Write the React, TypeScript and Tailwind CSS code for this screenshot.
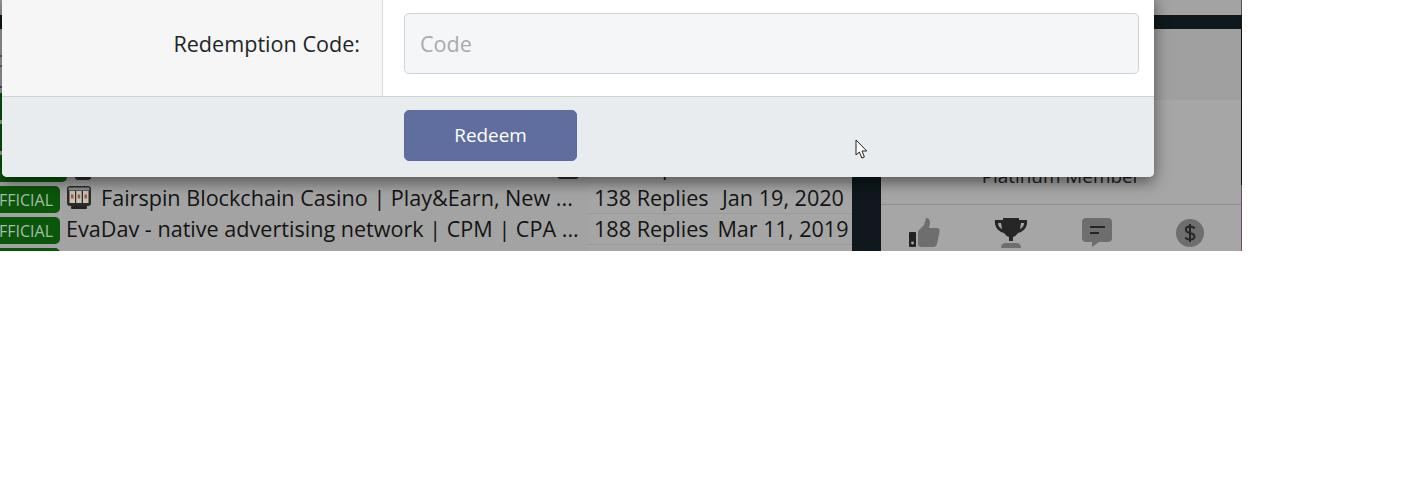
const rows = [
  { title: "", replies: "", date: "" },
  { title: "", replies: "", date: "" },
  { title: "", replies: "214 Replies", date: "", hidden: true },
  { title: "Fairspin Blockchain Casino | Play&Earn, New ...", replies: "138 Replies", date: "Jan 19, 2020", slot: true },
  { title: "EvaDav - native advertising network | CPM | CPA ...", replies: "188 Replies", date: "Mar 11, 2019" },
  { title: "", replies: "", date: "" },
];

function SlotIcon() {
  return (
    <svg width="26" height="26" viewBox="0 0 26 26" className="shrink-0">
      <rect x="1" y="1" width="24" height="20" rx="3" fill="#2b2b2b" />
      <rect x="2.5" y="2.5" width="21" height="3" fill="#8c8c8c" />
      <rect x="3.5" y="6" width="5.5" height="12" fill="#c9c2b4" />
      <rect x="10.2" y="6" width="5.5" height="12" fill="#c9c2b4" />
      <rect x="17" y="6" width="5.5" height="12" fill="#c9c2b4" />
      <rect x="5" y="9.5" width="2.5" height="4" fill="#9a5a48" />
      <rect x="11.7" y="9.5" width="2.5" height="4" fill="#9a5a48" />
      <rect x="18.5" y="9.5" width="2.5" height="4" fill="#9a5a48" />
      <rect x="5" y="21" width="16" height="3" rx="1" fill="#222" />
    </svg>
  );
}

function ThumbIcon() {
  return (
    <svg width="32" height="30" viewBox="0 0 32 30" className="ml-[28px]">
      <rect x="0" y="14" width="7" height="15" rx="1" fill="#222" />
      <circle cx="3.5" cy="25" r="1.4" fill="#aaa" />
      <path d="M9 13 L15 7 L17 0 Q21 0 21 5 L20 10 H28 Q31 10 30.5 14 L28 26 Q27 29 24 29 H13 Q9 29 9 26 Z" fill="#6e6e6e" />
    </svg>
  );
}

function TrophyIcon() {
  return (
    <svg width="34" height="30" viewBox="0 0 34 30" className="ml-[53px]">
      <path d="M9 0 H25 V2 H33 Q34 10 27 14 L24 15 Q22 18 19 19 V23 H15 V19 Q12 18 10 15 L7 14 Q0 10 1 2 H9 Z M4 5 Q4 9 8 11 L7 5 Z M30 5 H27 L26 11 Q30 9 30 5 Z" fill="#262626" fillRule="evenodd" />
      <path d="M7 30 Q7 25 12 25 H22 Q27 25 27 30 Z" fill="#6e6e6e" />
    </svg>
  );
}

function CommentIcon() {
  return (
    <svg width="30" height="30" viewBox="0 0 30 30" className="ml-[54px]">
      <path d="M4 0 H26 Q30 0 30 4 V20 Q30 24 26 24 H17 L10 29 V24 H4 Q0 24 0 20 V4 Q0 0 4 0 Z" fill="#6e6e6e" />
      <rect x="8" y="8" width="15" height="2" fill="#262626" />
      <rect x="8" y="14" width="9" height="2" fill="#262626" />
    </svg>
  );
}

function DollarIcon() {
  return (
    <svg width="28" height="28" viewBox="0 0 28 28" className="ml-[64px] mt-px">
      <circle cx="14" cy="14" r="14" fill="#6e6e6e" />
      <path d="M18.5 9.5 Q17.5 7.5 14 7.5 Q9.8 7.5 9.8 10.6 Q9.8 13.2 14 14 Q18.4 14.8 18.4 17.6 Q18.4 20.6 14 20.6 Q10.4 20.6 9.4 18.4 M14 5 V23" fill="none" stroke="#262626" strokeWidth="2" />
    </svg>
  );
}

function Cursor() {
  return (
    <svg width="13" height="21" viewBox="0 0 13 21" className="absolute left-[855px] top-[139px]">
      <path d="M1 1 V16 L4.4 13 L6.8 19 L9.4 18 L7 12 L11.8 12 Z" fill="#fff" stroke="#222" strokeWidth="1" />
    </svg>
  );
}

export default function App() {
  return (
    <div className="h-[486px] w-full overflow-hidden bg-white font-['Open_Sans',sans-serif]">
      <div className="relative h-[251px] w-[1242px] overflow-hidden bg-[#a3a3a3]">
        {/* page behind the dialog, already dimmed */}
        <div className="flex h-[15px] justify-end">
          <div className="w-px bg-[#555]" />
        </div>
        <div className="h-[14px] bg-[#0e181d]" />
        <div className="flex h-[222px]">
          <div className="w-[852px]">
            <div className="ml-0 mt-[26px] h-[2px] w-[3px] bg-[#666]" />
            <div className="mt-[8px] h-[2px] w-[3px] bg-[#666]" />
            <div className="mt-[19px] h-[2px] w-[3px] bg-[#556]" />
            <div className="h-[2px]" />
            {rows.map((r, i) => (
              <div key={i} className="flex h-[31px] items-center text-[21.6px] leading-[28px] text-[#141414]">
                <span
                  className={
                    r.hidden
                      ? "ml-[-14px] mr-[-7px] mt-px h-[27px] w-[81px] shrink-0 rounded-[5px] bg-[#0a560a]"
                      : "ml-[-14px] mt-px h-[27px] w-[74px] shrink-0 rounded-[5px] bg-[#0a560a] pr-[7px] pt-[4px] text-right text-[16px] leading-[21px] text-[#a8bca8]"
                  }
                >
                  {r.title ? "OFFICIAL" : ""}
                </span>
                <div className="flex h-[31px] w-[528px] shrink-0 items-center gap-[9px] overflow-hidden whitespace-nowrap pb-px pl-[6px]">
                  {r.slot && <SlotIcon />}
                  {r.hidden && <span className="ml-[9px] h-[25px] w-[16px] shrink-0 rounded-[3px] bg-[#2b2b2b]" />}
                  <span>{r.title}</span>
                  {r.hidden && <span className="ml-[448px] h-[24px] w-[22px] shrink-0 rounded-[4px] bg-[#2b2b2b]" />}
                </div>
                <div className="flex h-[31px] flex-1 items-center gap-[8px] border-b border-[#9a9a9a] bg-[#a5a5a5] pb-px pl-[6px]">
                  <span className="w-[114px] whitespace-nowrap">{r.replies}</span>
                  <span className="w-[134px] whitespace-nowrap text-center">{r.date}</span>
                </div>
              </div>
            ))}
          </div>
          <div className="w-[29px] bg-[#0e181d]" />
          <div className="flex w-[360px] flex-col">
            <div className="h-[71px] bg-[#a0a0a0]" />
            <div className="flex h-[105px] items-end justify-center border-b border-[#8f8f8f] bg-[#a6a6a6] pb-[16px] text-[18.9px] leading-[24px] text-[#1c1c1c]">
              Platinum Member
            </div>
            <div className="flex flex-1 items-start bg-[#a6a6a6] pt-[13px]">
              <ThumbIcon />
              <TrophyIcon />
              <CommentIcon />
              <DollarIcon />
            </div>
          </div>
          <div className="flex w-px flex-col">
            <div className="h-[156px] bg-[#111]" />
            <div className="flex-1 bg-[#6d4a6d]" />
          </div>
        </div>

        <div className="absolute left-[2px] top-[-6px] w-[1152px] overflow-hidden rounded-b-[5px] bg-white shadow-[0_5px_15px_rgba(0,0,0,0.5)]">
          <div className="flex h-[103px] border-b border-[#d0d3d6]">
            <div className="flex w-[381px] items-center justify-end border-r border-[#dedede] bg-[#f6f6f6] pb-[2px] pr-[22px] text-[21.6px] text-[#212529]">
              Redemption Code:
            </div>
            <div className="flex flex-1 items-start pl-[21px] pr-[15px] pt-[19px]">
              <input
                readOnly
                placeholder="Code"
                className="h-[61px] w-full rounded-[5px] border border-[#ced4da] bg-[#f5f6f8] px-[15px] text-[21.6px] outline-none placeholder:text-[#a8abae]"
              />
            </div>
          </div>
          <div className="h-[80px] bg-[#e9ecef] pl-[402px] pt-[13px]">
            <button className="h-[51px] w-[173px] rounded-[5px] border border-[#5d6c9c] bg-[#5f6e9e] text-[18.9px] font-medium text-white">
              Redeem
            </button>
          </div>
        </div>
        <Cursor />
      </div>
    </div>
  );
}
